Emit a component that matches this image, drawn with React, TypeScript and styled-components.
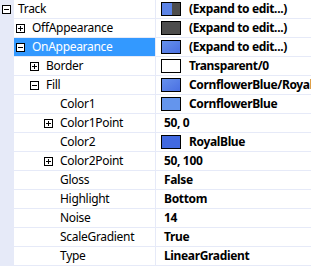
import React from "react";
import styled, { createGlobalStyle, css } from "styled-components";

const GlobalStyle = createGlobalStyle`
  html, body { margin: 0; padding: 0; background: #ffffff; overflow: hidden; }
  body { font-family: "Noto Sans", "Open Sans", Arial, sans-serif; }
`;

const LINE = "#E6EAF8";

const Grid = styled.div`
  width: 311px;
  height: 266px;
  display: flex;
  flex-direction: column;
  overflow: hidden;
  background: #ffffff;
  font-size: 12px;
  letter-spacing: -0.3px;
  color: #000000;
`;

const Row = styled.div`
  display: grid;
  grid-template-columns: 155px 1px 1fr;
  height: 19px;
  flex: none;
`;

const NameCell = styled.div<{ $level: number; $selected?: boolean }>`
  display: flex;
  align-items: center;
  gap: 7px;
  padding-left: ${(p) => 2 + 14 * p.$level}px;
  height: 18px;
  border-bottom: 1px solid ${LINE};
  background: linear-gradient(
    to right,
    ${LINE} 0 14px,
    ${(p) => (p.$selected ? "#3399FF" : "#ffffff")} 14px
  );
  color: ${(p) => (p.$selected ? "#ffffff" : "#000000")};
  white-space: nowrap;
  overflow: hidden;
`;

const Divider = styled.div`
  background: ${LINE};
`;

const ValueCell = styled.div<{ $swatch: boolean }>`
  display: flex;
  align-items: center;
  gap: 8px;
  height: 18px;
  padding-left: ${(p) => (p.$swatch ? 5 : 8)}px;
  border-bottom: 1px solid ${LINE};
  font-weight: 700;
  letter-spacing: -0.35px;
  white-space: nowrap;
  overflow: hidden;
`;

const Label = styled.span`
  line-height: 18px;
`;

const ExpanderSlot = styled.span`
  width: 9px;
  height: 9px;
  flex: none;
  display: block;
`;

type SwatchKind = "track" | "gray" | "blue" | "white" | "cornflower" | "royal";

const swatchFill: Record<SwatchKind, ReturnType<typeof css>> = {
  track: css`
    background: linear-gradient(
      to right,
      #5b83e6 0 10px,
      #4d4d4d 10px
    );
  `,
  gray: css`
    background: #4d4d4d;
  `,
  blue: css`
    background: linear-gradient(to bottom right, #6690ec, #4a70e2);
  `,
  white: css`
    background: #ffffff;
  `,
  cornflower: css`
    background: #6495ed;
  `,
  royal: css`
    background: #4169e1;
  `,
};

const Swatch = styled.span<{ $kind: SwatchKind }>`
  width: 18px;
  height: 12px;
  flex: none;
  border: 1px solid #000000;
  ${(p) => swatchFill[p.$kind]}
`;

const Expander: React.FC<{ open: boolean }> = ({ open }) => (
  <svg width="9" height="9" viewBox="0 0 9 9" style={{ display: "block", flex: "none" }}>
    <rect x="0.5" y="0.5" width="8" height="8" fill="#ffffff" stroke="#000000" />
    <line x1="2" y1="4.5" x2="7" y2="4.5" stroke="#000000" />
    {!open && <line x1="4.5" y1="2" x2="4.5" y2="7" stroke="#000000" />}
  </svg>
);

type Item = {
  name: string;
  level: number;
  exp?: "open" | "closed";
  swatch?: SwatchKind;
  value: string;
  selected?: boolean;
};

const items: Item[] = [
  { name: "Track", level: 0, exp: "open", swatch: "track", value: "(Expand to edit...)" },
  { name: "OffAppearance", level: 1, exp: "closed", swatch: "gray", value: "(Expand to edit...)" },
  { name: "OnAppearance", level: 1, exp: "open", swatch: "blue", value: "(Expand to edit...)", selected: true },
  { name: "Border", level: 2, exp: "closed", swatch: "white", value: "Transparent/0" },
  { name: "Fill", level: 2, exp: "open", swatch: "blue", value: "CornflowerBlue/RoyalBlue" },
  { name: "Color1", level: 3, swatch: "cornflower", value: "CornflowerBlue" },
  { name: "Color1Point", level: 3, exp: "closed", value: "50, 0" },
  { name: "Color2", level: 3, swatch: "royal", value: "RoyalBlue" },
  { name: "Color2Point", level: 3, exp: "closed", value: "50, 100" },
  { name: "Gloss", level: 3, value: "False" },
  { name: "Highlight", level: 3, value: "Bottom" },
  { name: "Noise", level: 3, value: "14" },
  { name: "ScaleGradient", level: 3, value: "True" },
  { name: "Type", level: 3, value: "LinearGradient" },
];

export default function App() {
  return (
    <>
      <GlobalStyle />
      <Grid>
        {items.map((it) => (
          <Row key={it.name}>
            <NameCell $level={it.level} $selected={it.selected}>
              {it.exp ? <Expander open={it.exp === "open"} /> : <ExpanderSlot />}
              <Label>{it.name}</Label>
            </NameCell>
            <Divider />
            <ValueCell $swatch={!!it.swatch}>
              {it.swatch && <Swatch $kind={it.swatch} />}
              <Label>{it.value}</Label>
            </ValueCell>
          </Row>
        ))}
      </Grid>
    </>
  );
}
